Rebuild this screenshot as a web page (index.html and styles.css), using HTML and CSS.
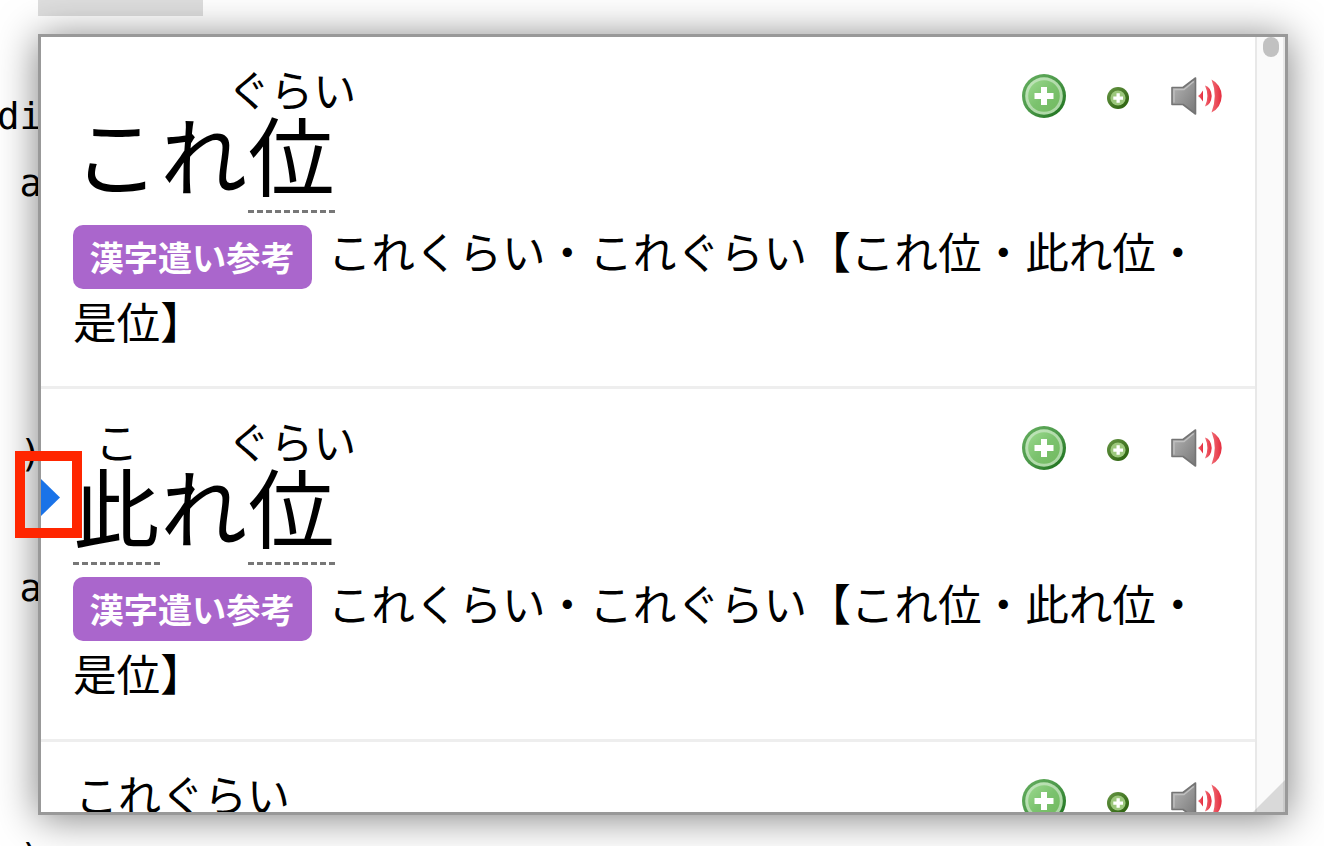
FILE: index.html
```html
<!DOCTYPE html>
<html lang="ja">
<head>
<meta charset="utf-8">
<title>これ位</title>
<link rel="stylesheet" href="styles.css">
</head>
<body>
<svg class="defs" aria-hidden="true">
  <defs>
    <linearGradient id="rim" x1="0" y1="0" x2="1" y2="1"><stop offset="0" stop-color="#67b061"/><stop offset=".5" stop-color="#4b9849"/><stop offset="1" stop-color="#166b16"/></linearGradient>
    <linearGradient id="ring" x1="0" y1="0" x2="1" y2="1"><stop offset="0" stop-color="#c1e6bb"/><stop offset=".5" stop-color="#b2dbab"/><stop offset="1" stop-color="#acd7a5"/></linearGradient>
    <linearGradient id="disc" x1="0" y1="0" x2="1" y2="1"><stop offset="0" stop-color="#9bd98e"/><stop offset=".5" stop-color="#7bc26e"/><stop offset="1" stop-color="#72b95f"/></linearGradient>
    <linearGradient id="smallrim" x1="0" y1="0" x2="1" y2="1"><stop offset="0" stop-color="#689746"/><stop offset="1" stop-color="#255c08"/></linearGradient>
    <linearGradient id="metal" x1="0" y1="0" x2="1" y2="1"><stop offset="0" stop-color="#b8b8b8"/><stop offset="1" stop-color="#777"/></linearGradient>
    <linearGradient id="wave" x1="0" y1="0" x2="1" y2="0"><stop offset="0" stop-color="#f06c75"/><stop offset="1" stop-color="#e52b3d"/></linearGradient>
    <symbol id="add" viewBox="0 0 44 44">
      <circle cx="22" cy="22" r="22" fill="url(#rim)"/>
      <circle cx="22" cy="22" r="18.8" fill="url(#ring)"/>
      <circle cx="22" cy="22" r="15.8" fill="url(#disc)"/>
      <path d="M19 13h6v6h6.500v6H25v6h-6v-6h-6.500v-6H19z" fill="#fff"/>
    </symbol>
    <symbol id="add-small" viewBox="0 0 22 22">
      <circle cx="11" cy="11" r="11" fill="url(#smallrim)"/>
      <circle cx="11" cy="11" r="7.6" fill="#9cc77c"/>
      <path d="M9.500 6.300h3.300v3.100H16v3.300h-3.200v3.100H9.500v-3.100H6.300V9.400h3.200z" fill="#fff"/>
    </symbol>
    <symbol id="speaker" viewBox="0 0 52 38">
      <path d="M1 10.500h11L24.500 1v36L12 27.500H1z" fill="url(#metal)" stroke="#747474" stroke-width="1.600" stroke-linejoin="round"/>
      <path d="M3 25.500v-13h10L22.700 4.600" fill="none" stroke="#c0c0c0" stroke-width="1.300"/>
      <path d="M32 13.500v11q-2-3.500-5-5.500 3-2 5-5.500z" fill="url(#wave)"/>
      <path d="M34 8.500q6.200 1.800 6.700 10.500-.5 8.700-6.700 10.500 4.800-10.500 0-21z" fill="url(#wave)"/>
      <path d="M40.500 2.500q9.800 5 10.200 16.500-.4 11.500-10.200 16.500 6.500-16.500 0-33z" fill="url(#wave)"/>
    </symbol>
  </defs>
</svg>
<div class="page">
  <div class="selection"></div>
  <pre class="code">di
 a



 )

 a



 )</pre>
</div>
<main class="popup">
  <div class="entries">
    <article class="entry first">
      <div class="head">
        <div class="word">
          <span class="unit"><span class="reading"></span><span class="base">こ</span></span>
          <span class="unit"><span class="reading"></span><span class="base">れ</span></span>
          <span class="unit"><span class="reading">ぐらい</span><span class="base kanji">位</span></span>
        </div>
        <div class="actions">
          <svg class="add"><use href="#add"/></svg>
          <svg class="add-small"><use href="#add-small"/></svg>
          <svg class="speaker"><use href="#speaker"/></svg>
        </div>
      </div>
      <p class="definition"><span class="tag">漢字遣い参考</span>これくらい・これぐらい【これ位・此れ位・<br>是位】</p>
    </article>
    <article class="entry">
      <div class="head">
        <div class="word">
          <span class="unit"><span class="reading">こ</span><span class="base kanji">此</span></span>
          <span class="unit"><span class="reading"></span><span class="base">れ</span></span>
          <span class="unit"><span class="reading">ぐらい</span><span class="base kanji">位</span></span>
        </div>
        <div class="actions">
          <svg class="add"><use href="#add"/></svg>
          <svg class="add-small"><use href="#add-small"/></svg>
          <svg class="speaker"><use href="#speaker"/></svg>
        </div>
      </div>
      <p class="definition"><span class="tag">漢字遣い参考</span>これくらい・これぐらい【これ位・此れ位・<br>是位】</p>
    </article>
    <article class="entry">
      <div class="head">
        <div class="word wide"><span class="reading">これぐらい</span></div>
        <div class="actions">
          <svg class="add"><use href="#add"/></svg>
          <svg class="add-small"><use href="#add-small"/></svg>
          <svg class="speaker"><use href="#speaker"/></svg>
        </div>
      </div>
    </article>
  </div>
  <div class="scrollbar"><div class="thumb"></div></div>
  <div class="current"></div>
  <div class="resizer"></div>
</main>
<div class="highlight"></div>
</body>
</html>
```
FILE: styles.css
```css
* { box-sizing: border-box; }
body {
  margin: 0;
  width: 1324px;
  height: 846px;
  position: relative;
  overflow: hidden;
  background: #fff;
  color: #000;
  font-family: "Noto Sans CJK JP", sans-serif;
}
.defs { position: absolute; width: 0; height: 0; }
.page { height: 846px; overflow: hidden; }
.selection { width: 165px; height: 16px; margin-left: 38px; background: #dedede; }
.code {
  margin: 67px 0 0 -3px;
  font: 37.5px/67.4px "DejaVu Sans Mono", monospace;
}
/* Popup window floating over the page */
.popup {
  position: absolute;
  left: 38px;
  top: 34px;
  width: 1250px;
  height: 781px;
  display: flex;
  overflow: hidden;
  border: 3px solid #999;
  background: #fff;
  box-shadow: 0 3px 38px rgba(0, 0, 0, .5);
}
.entries { flex: 1; height: 775px; overflow: hidden; }
.entry {
  height: 353px;
  padding: 28px 32px 0;
  border-bottom: 3px solid #eee;
}
.first { height: 352px; }
.head { display: flex; justify-content: space-between; height: 148px; }
.word { display: flex; }
.wide { padding-left: 2px; }
.unit { width: 87.5px; display: flex; flex-direction: column; align-items: center; }
.reading { height: 45px; font-size: 43px; line-height: 46px; white-space: nowrap; }
.base { width: 87.5px; height: 103px; font-size: 86.5px; line-height: 85px; }
.kanji {
  background: repeating-linear-gradient(90deg, #777 0 6px, transparent 6px 9px) left bottom / 100% 3px no-repeat;
}
.actions { display: flex; padding-top: 9px; }
.add { width: 44px; height: 44px; }
.add-small { width: 22px; height: 22px; margin: 12.5px 0 0 41px; }
.speaker { width: 52px; height: 38px; margin: 3px 0 0 42px; }
.definition { margin: 1.5px 0 0; font-size: 43.6px; line-height: 70px; white-space: nowrap; }
.tag {
  margin-right: 16px;
  padding: 6px 17px 8px 16.5px;
  border-radius: 10px;
  background: #aa66cc;
  color: #fff;
  font-size: 34.2px;
  font-weight: 700;
  line-height: 1;
  position: relative;
  top: 2px;
}
.scrollbar {
  width: 30px;
  border: solid #e8e8e8;
  border-width: 0 2px;
  background: #fafafa;
}
.thumb { width: 16px; height: 20px; margin-left: 6px; border-radius: 8px; background: #c1c1c1; }
.current {
  position: absolute;
  left: 0;
  top: 442px;
  width: 19px;
  height: 37px;
  background: #1a73e8;
  clip-path: polygon(0 0, 100% 50%, 0 100%);
}
.resizer {
  position: absolute;
  right: 0;
  bottom: 0;
  width: 32px;
  height: 32px;
  background: rgba(0, 0, 0, .13);
  clip-path: polygon(100% 0, 100% 100%, 0 100%);
}
.highlight {
  position: absolute;
  left: 15px;
  top: 451px;
  width: 67px;
  height: 87px;
  border: 10px solid #ff2600;
}
```
